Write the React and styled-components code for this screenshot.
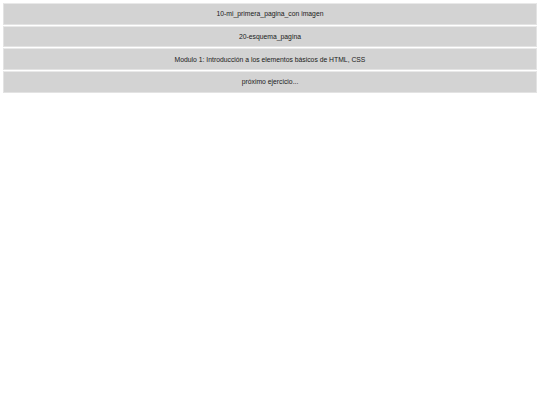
import React from 'react'
import styled, { createGlobalStyle } from 'styled-components'

const GlobalStyle = createGlobalStyle`
    body {
        margin: 0;
        background: #ffffff;
        font-family: "Liberation Sans", Arial, sans-serif;
    }
`

const List = styled.div`
    display: flex;
    flex-direction: column;
    gap: 1px;
    padding: 3px 3px 0 3px;
`

const Item = styled.div`
    height: 19.67px;
    display: flex;
    align-items: center;
    justify-content: center;
    background: #d3d3d3;
    border: 1px solid #e3e3e3;
    border-top-color: #e9e9e9;
    font-size: 6.8px;
    color: #1a1a1a;
`

const items = [
    '10-mi_primera_pagina_con imagen',
    '20-esquema_pagina',
    'Modulo 1: Introducción a los elementos básicos de HTML, CSS',
    'próximo ejercicio...',
]

export default function App() {
    return (
        <>
            <GlobalStyle />
            <List>
                {items.map((t) => (
                    <Item key={t}>{t}</Item>
                ))}
            </List>
        </>
    )
}
